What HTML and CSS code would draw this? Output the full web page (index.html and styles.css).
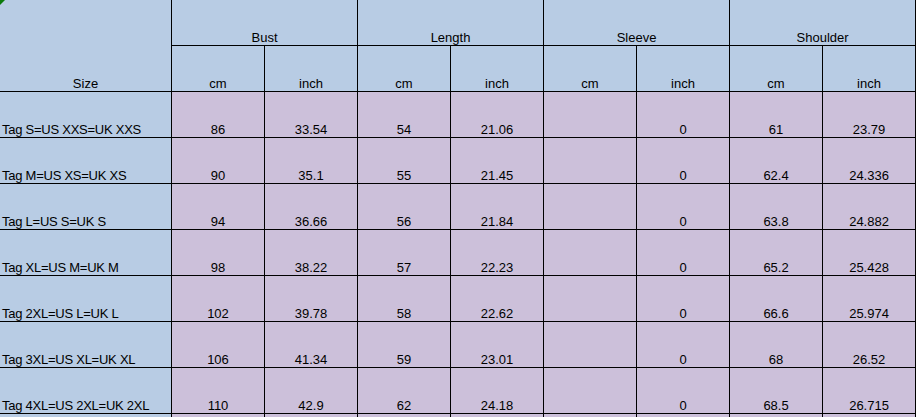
FILE: index.html
```html
<!DOCTYPE html>
<html lang="en">
<head>
<meta charset="utf-8">
<title>Size chart</title>
<link rel="stylesheet" href="styles.css">
</head>
<body>
<table class="sheet">
  <colgroup>
    <col class="col-size">
    <col class="col-val"><col class="col-val"><col class="col-val"><col class="col-val">
    <col class="col-val"><col class="col-val"><col class="col-val"><col class="col-val">
  </colgroup>
  <thead>
    <tr class="row">
      <th class="cell head size" rowspan="2"><span class="flag"></span>Size</th>
      <th class="cell head" colspan="2">Bust</th>
      <th class="cell head" colspan="2">Length</th>
      <th class="cell head" colspan="2">Sleeve</th>
      <th class="cell head" colspan="2">Shoulder</th>
    </tr>
    <tr class="row">
      <th class="cell head">cm</th><th class="cell head">inch</th>
      <th class="cell head">cm</th><th class="cell head">inch</th>
      <th class="cell head">cm</th><th class="cell head">inch</th>
      <th class="cell head">cm</th><th class="cell head">inch</th>
    </tr>
  </thead>
  <tbody>
    <tr class="row">
      <td class="cell label">Tag S=US XXS=UK XXS</td>
      <td class="cell val">86</td><td class="cell val">33.54</td>
      <td class="cell val">54</td><td class="cell val">21.06</td>
      <td class="cell val"></td><td class="cell val">0</td>
      <td class="cell val">61</td><td class="cell val">23.79</td>
    </tr>
    <tr class="row">
      <td class="cell label">Tag M=US XS=UK XS</td>
      <td class="cell val">90</td><td class="cell val">35.1</td>
      <td class="cell val">55</td><td class="cell val">21.45</td>
      <td class="cell val"></td><td class="cell val">0</td>
      <td class="cell val">62.4</td><td class="cell val">24.336</td>
    </tr>
    <tr class="row">
      <td class="cell label">Tag L=US S=UK S</td>
      <td class="cell val">94</td><td class="cell val">36.66</td>
      <td class="cell val">56</td><td class="cell val">21.84</td>
      <td class="cell val"></td><td class="cell val">0</td>
      <td class="cell val">63.8</td><td class="cell val">24.882</td>
    </tr>
    <tr class="row">
      <td class="cell label">Tag XL=US M=UK M</td>
      <td class="cell val">98</td><td class="cell val">38.22</td>
      <td class="cell val">57</td><td class="cell val">22.23</td>
      <td class="cell val"></td><td class="cell val">0</td>
      <td class="cell val">65.2</td><td class="cell val">25.428</td>
    </tr>
    <tr class="row">
      <td class="cell label">Tag 2XL=US L=UK L</td>
      <td class="cell val">102</td><td class="cell val">39.78</td>
      <td class="cell val">58</td><td class="cell val">22.62</td>
      <td class="cell val"></td><td class="cell val">0</td>
      <td class="cell val">66.6</td><td class="cell val">25.974</td>
    </tr>
    <tr class="row">
      <td class="cell label">Tag 3XL=US XL=UK XL</td>
      <td class="cell val">106</td><td class="cell val">41.34</td>
      <td class="cell val">59</td><td class="cell val">23.01</td>
      <td class="cell val"></td><td class="cell val">0</td>
      <td class="cell val">68</td><td class="cell val">26.52</td>
    </tr>
    <tr class="row">
      <td class="cell label">Tag 4XL=US 2XL=UK 2XL</td>
      <td class="cell val">110</td><td class="cell val">42.9</td>
      <td class="cell val">62</td><td class="cell val">24.18</td>
      <td class="cell val"></td><td class="cell val">0</td>
      <td class="cell val">68.5</td><td class="cell val">26.715</td>
    </tr>
    <tr class="row">
      <td class="cell label"></td>
      <td class="cell val"></td><td class="cell val"></td>
      <td class="cell val"></td><td class="cell val"></td>
      <td class="cell val"></td><td class="cell val"></td>
      <td class="cell val"></td><td class="cell val"></td>
    </tr>
  </tbody>
</table>
</body>
</html>
```

FILE: styles.css
```css
html, body {
  margin: 0;
  padding: 0;
  background: #ffffff;
}

body {
  font-family: "Liberation Sans", Arial, sans-serif;
  font-size: 13px;
  color: #000000;
}

.sheet {
  border-collapse: separate;
  border-spacing: 0;
  table-layout: fixed;
  width: 916px;
}

.col-size { width: 172px; }
.col-val { width: 93px; }

.row { height: 46px; }

.cell {
  box-sizing: border-box;
  height: 46px;
  padding: 0;
  border-right: 1px solid #000000;
  border-bottom: 1px solid #000000;
  vertical-align: bottom;
  line-height: 15px;
  font-weight: normal;
  text-align: center;
  white-space: nowrap;
  overflow: hidden;
}

.head {
  background: #b8cce4;
}

.size {
  position: relative;
  height: 92px;
}

.label {
  background: #b8cce4;
  text-align: left;
  padding-left: 2px;
  letter-spacing: -0.25px;
}

.val {
  background: #ccc0da;
}

.flag {
  position: absolute;
  left: 0;
  top: 0;
  width: 0;
  height: 0;
  border-top: 5px solid #0a7a0a;
  border-right: 5px solid transparent;
}
```
